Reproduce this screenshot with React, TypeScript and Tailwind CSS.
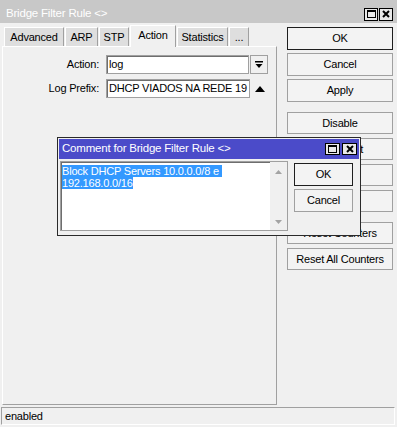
import React from 'react';

function MaxIcon() {
    return (
        <svg width="9" height="8" viewBox="0 0 9 8">
            <rect x="0.5" y="0.5" width="8" height="7" fill="none" stroke="#000" />
            <rect x="0" y="0" width="9" height="2" fill="#000" />
        </svg>
    );
}

function CloseIcon() {
    return (
        <svg width="8" height="8" viewBox="0 0 8 8">
            <path d="M1 1L7 7M7 1L1 7" stroke="#000" strokeWidth="2" />
        </svg>
    );
}

function Tab({ label, className, active }: { label: string; className: string; active?: boolean }) {
    if (active) {
        return (
            <div className={`relative z-10 -mb-[1px] h-[22px] pb-[2px] flex items-center justify-center bg-[#f0f0f0] border-t border-l border-white border-r border-r-[#a0a0a0] ${className}`}>
                {label}
            </div>
        );
    }
    return (
        <div className={`h-[19px] flex items-center justify-center bg-[#dedede] border-t border-l border-white border-r border-r-[#a0a0a0] ${className}`}>
            {label}
        </div>
    );
}

function SideButton({ label, className, primary }: { label: string; className?: string; primary?: boolean }) {
    return (
        <div
            className={`w-full flex items-center justify-center bg-[#f3f3f3] border ${primary ? 'border-[#1e1e1e]' : 'border-[#a0a0a0]'} ${className ?? ''}`}
        >
            {label}
        </div>
    );
}

export default function App() {
    return (
        <div className="relative w-[397px] h-[427px] overflow-hidden bg-[#f0f0f0] font-['Liberation_Sans',Arial,sans-serif] text-[11px] tracking-[-0.2px] leading-none text-black">
            {/* window title */}
            <div className="h-[23px] bg-[#c8c8c8] flex items-center pt-[5px] pl-[6px] pr-[4px] text-white text-[11.5px]">
                <span className="flex-1">Bridge Filter Rule &lt;&gt;</span>
                <div className="flex gap-[1px]">
                    <div className="w-[14px] h-[13px] bg-[#e8e8e8] border border-black flex items-center justify-center">
                        <MaxIcon />
                    </div>
                    <div className="w-[14px] h-[13px] bg-[#e8e8e8] border border-black flex items-center justify-center">
                        <CloseIcon />
                    </div>
                </div>
            </div>

            <div className="flex h-[384px]">
                <div className="w-[277px] pl-[2px] flex flex-col">
                    <div className="h-[23px] flex items-end gap-[1px] pl-[2px]">
                        <Tab label="Advanced" className="w-[60px]" />
                        <Tab label="ARP" className="w-[33px]" />
                        <Tab label="STP" className="w-[30px]" />
                        <Tab label="Action" className="w-[46px]" active />
                        <Tab label="Statistics" className="w-[51px]" />
                        <Tab label="..." className="w-[20px]" />
                    </div>
                    <div className="flex-1 mb-[2px] border-t border-l border-white border-r border-b border-r-[#a0a0a0] border-b-[#a0a0a0] pt-[8px]">
                        <div className="flex items-center h-[19px]">
                            <div className="w-[96px] text-right">Action:</div>
                            <div className="ml-[7px] w-[143px] h-[19px] bg-white border border-[#a0a0a0] shadow-[inset_1px_1px_0_#6e6e6e] flex items-center pl-[2px]">
                                log
                            </div>
                            <div className="ml-[1px] w-[18px] h-[19px] bg-[#f0f0f0] border border-[#a0a0a0] flex items-center justify-center">
                                <svg width="8" height="8" viewBox="0 0 8 8">
                                    <rect x="0" y="0" width="8" height="1.5" fill="#000" />
                                    <path d="M0.5 3H7.5L4 7Z" fill="#000" />
                                </svg>
                            </div>
                        </div>
                        <div className="flex items-center h-[19px] mt-[5px]">
                            <div className="w-[96px] text-right">Log Prefix:</div>
                            <div className="ml-[7px] w-[144px] h-[19px] bg-white border border-[#a0a0a0] shadow-[inset_1px_1px_0_#6e6e6e] flex items-center pl-[2px] overflow-hidden whitespace-nowrap">
                                DHCP VIADOS NA REDE 19
                            </div>
                            <svg className="ml-[5px]" width="10" height="6" viewBox="0 0 10 6">
                                <path d="M0 6H10L5 0Z" fill="#000" />
                            </svg>
                        </div>
                    </div>
                </div>

                <div className="ml-[10px] w-[106px] pt-[4px] flex flex-col">
                    <SideButton label="OK" className="h-[23px]" primary />
                    <SideButton label="Cancel" className="h-[23px] mt-[3px]" />
                    <SideButton label="Apply" className="h-[23px] mt-[3px]" />
                    <SideButton label="Disable" className="h-[22px] mt-[10px]" />
                    <SideButton label="Comment" className="h-[22px] mt-[4px]" />
                    <SideButton label="Copy" className="h-[22px] mt-[4px]" />
                    <SideButton label="Remove" className="h-[22px] mt-[4px]" />
                    <SideButton label="Reset Counters" className="h-[22px] mt-[10px]" />
                    <SideButton label="Reset All Counters" className="h-[22px] mt-[4px]" />
                </div>
            </div>

            {/* status bar */}
            <div className="ml-[1px] w-[394px] h-[18px] border-t border-l border-[#a0a0a0] border-r border-b border-r-white border-b-white flex items-center pl-[3px]">
                enabled
            </div>

            {/* comment dialog */}
            <div className="absolute left-[57px] top-[137px] w-[304px] bg-[#f0f0f0] border border-[#2a2a2a]">
                <div className="m-[1px] h-[20px] bg-[#4b4bc9] flex items-center pl-[3px] pr-[2px] text-white text-[11.5px]">
                    <span className="flex-1">Comment for Bridge Filter Rule &lt;&gt;</span>
                    <div className="flex gap-[2px]">
                        <div className="w-[15px] h-[12px] bg-[#e8e8e8] border border-black flex items-center justify-center">
                            <MaxIcon />
                        </div>
                        <div className="w-[15px] h-[12px] bg-[#e8e8e8] border border-black flex items-center justify-center">
                            <CloseIcon />
                        </div>
                    </div>
                </div>
                <div className="flex pl-[2px] pr-[5px] pt-[1px] pb-[4px] gap-[6px]">
                    <div className="w-[228px] h-[70px] bg-white border border-[#a0a0a0] shadow-[inset_1px_1px_0_#6e6e6e] flex">
                        <div className="flex-1 pt-[3px] pl-[1px] leading-[12px]">
                            <div>
                                <span className="bg-[#3399ff] text-white">Block DHCP Servers 10.0.0.0/8 e&nbsp;</span>
                            </div>
                            <div>
                                <span className="bg-[#3399ff] text-white">192.168.0.0/16</span>
                            </div>
                        </div>
                        <div className="w-[17px] bg-[#f0f0f0] flex flex-col items-center justify-between pt-[8px] pb-[6px]">
                            <svg width="7" height="4" viewBox="0 0 7 4">
                                <path d="M0 4H7L3.5 0Z" fill="#a3a3a3" />
                            </svg>
                            <svg width="7" height="4" viewBox="0 0 7 4">
                                <path d="M0 0H7L3.5 4Z" fill="#a3a3a3" />
                            </svg>
                        </div>
                    </div>
                    <div className="w-[59px] flex flex-col pt-[2px]">
                        <SideButton label="OK" className="h-[23px]" primary />
                        <SideButton label="Cancel" className="h-[23px] mt-[3px]" />
                    </div>
                </div>
            </div>
        </div>
    );
}
